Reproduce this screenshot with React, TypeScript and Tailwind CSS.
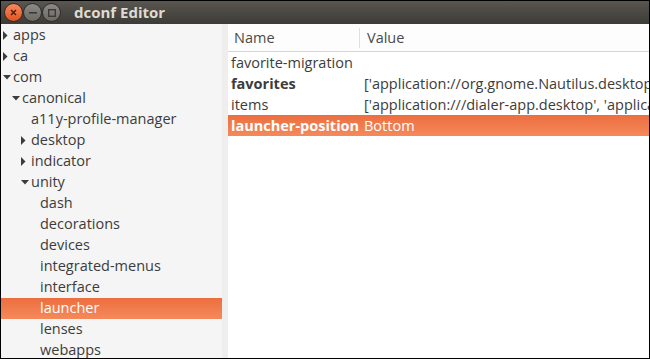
import type { ReactNode } from 'react';

interface TreeItem {
  label: string;
  level: number;
  arrow?: 'right' | 'down';
  selected?: boolean;
}

const tree: TreeItem[] = [
  { label: 'apps', level: 0, arrow: 'right' },
  { label: 'ca', level: 0, arrow: 'right' },
  { label: 'com', level: 0, arrow: 'down' },
  { label: 'canonical', level: 1, arrow: 'down' },
  { label: 'a11y-profile-manager', level: 2 },
  { label: 'desktop', level: 2, arrow: 'right' },
  { label: 'indicator', level: 2, arrow: 'right' },
  { label: 'unity', level: 2, arrow: 'down' },
  { label: 'dash', level: 3 },
  { label: 'decorations', level: 3 },
  { label: 'devices', level: 3 },
  { label: 'integrated-menus', level: 3 },
  { label: 'interface', level: 3 },
  { label: 'launcher', level: 3, selected: true },
  { label: 'lenses', level: 3 },
  { label: 'webapps', level: 3 },
];

const keys = [
  { name: 'favorite-migration', value: '', bold: false },
  { name: 'favorites', value: "['application://org.gnome.Nautilus.desktop', 'application://firefox.desktop']", bold: true },
  { name: 'items', value: "['application:///dialer-app.desktop', 'application:///messaging-app.desktop']", bold: false },
  { name: 'launcher-position', value: 'Bottom', bold: true, selected: true },
];

const indent = ['pl-[2px]', 'pl-[11px]', 'pl-[20px]', 'pl-[29px]'];

function Arrow({ dir, light }: { dir?: 'right' | 'down'; light?: boolean }) {
  const fill = light ? '#ffffff' : '#3c3c3c';
  return (
    <span className="w-[10px] h-[21px] flex items-center shrink-0">
      {dir === 'right' && (
        <svg width="5" height="9" viewBox="0 0 5 9">
          <path d="M0 0 L4.5 4.5 L0 9 Z" fill={fill} />
        </svg>
      )}
      {dir === 'down' && (
        <svg width="8" height="5" viewBox="0 0 8 5">
          <path d="M0 0 L8 0 L4 4.5 Z" fill={fill} />
        </svg>
      )}
    </span>
  );
}

function WinButton({ children, close }: { children: ReactNode; close?: boolean }) {
  return (
    <span
      className={
        close
          ? 'w-[19px] h-[19px] rounded-full flex items-center justify-center bg-gradient-to-b from-[#f58a5e] to-[#e2521f] border border-[#3a2a22]'
          : 'w-[19px] h-[19px] rounded-full flex items-center justify-center bg-gradient-to-b from-[#8c8a85] to-[#6c6a65] border border-[#2f2e2b]'
      }
    >
      {children}
    </span>
  );
}

export default function App() {
  return (
    <div
      className="w-[650px] h-[359px] border border-black flex flex-col overflow-hidden text-[#3c3c3c] text-[14.5px]"
      style={{ fontFamily: '"Open Sans", "Noto Sans", sans-serif' }}
    >
      <div className="h-[23px] shrink-0 bg-gradient-to-b from-[#5a5650] to-[#3c3b37] flex items-center pl-[3px]">
        <div className="flex items-center">
          <WinButton close>
            <svg width="7" height="7" viewBox="0 0 7 7">
              <path d="M1 1 L6 6 M6 1 L1 6" stroke="#4a1a08" strokeWidth="1.4" />
            </svg>
          </WinButton>
          <WinButton>
            <svg width="8" height="2" viewBox="0 0 8 2">
              <rect x="0" y="0" width="8" height="1.6" fill="#3c3b37" />
            </svg>
          </WinButton>
          <WinButton>
            <svg width="8" height="8" viewBox="0 0 8 8">
              <rect x="0.7" y="0.7" width="6.6" height="6.6" fill="none" stroke="#3c3b37" strokeWidth="1.4" />
            </svg>
          </WinButton>
        </div>
        <span className="ml-[13px] text-[15px] font-bold text-[#dfdbd2] leading-none">dconf Editor</span>
      </div>
      <div className="flex flex-1 min-h-0">
        <div className="w-[221px] shrink-0 bg-[#f5f5f5] pt-[1px]">
          {tree.map((t) => (
            <div
              key={t.label}
              className={
                t.selected
                  ? 'h-[21px] flex items-center bg-gradient-to-b from-[#ec6e3f] to-[#f5895a] text-white'
                  : 'h-[21px] flex items-center'
              }
            >
              <div className={'flex items-center ' + indent[t.level]}>
                <Arrow dir={t.arrow} light={t.selected} />
                <span className="leading-none">{t.label}</span>
              </div>
            </div>
          ))}
        </div>
        <div className="w-[6px] shrink-0 bg-[#efeeec]" />
        <div className="flex-1 min-w-0 bg-white overflow-hidden">
          <div className="h-[28px] flex items-center border-b border-[#d6d6d6] bg-[#fdfdfd] text-[#4a4a4a]">
            <div className="w-[132px] shrink-0 pl-[6px] h-[20px] flex items-center border-r border-[#e0e0e0]">Name</div>
            <div className="pl-[7px]">Value</div>
          </div>
          {keys.map((k) => (
            <div
              key={k.name}
              className={
                k.selected
                  ? 'h-[21px] flex items-center whitespace-nowrap bg-gradient-to-b from-[#ec6e3f] to-[#f5895a] text-white'
                  : 'h-[21px] flex items-center whitespace-nowrap'
              }
            >
              <div className={'w-[136px] shrink-0 pl-[3px] ' + (k.bold ? 'font-bold' : '')}>{k.name}</div>
              <div>{k.value}</div>
            </div>
          ))}
        </div>
      </div>
    </div>
  );
}
